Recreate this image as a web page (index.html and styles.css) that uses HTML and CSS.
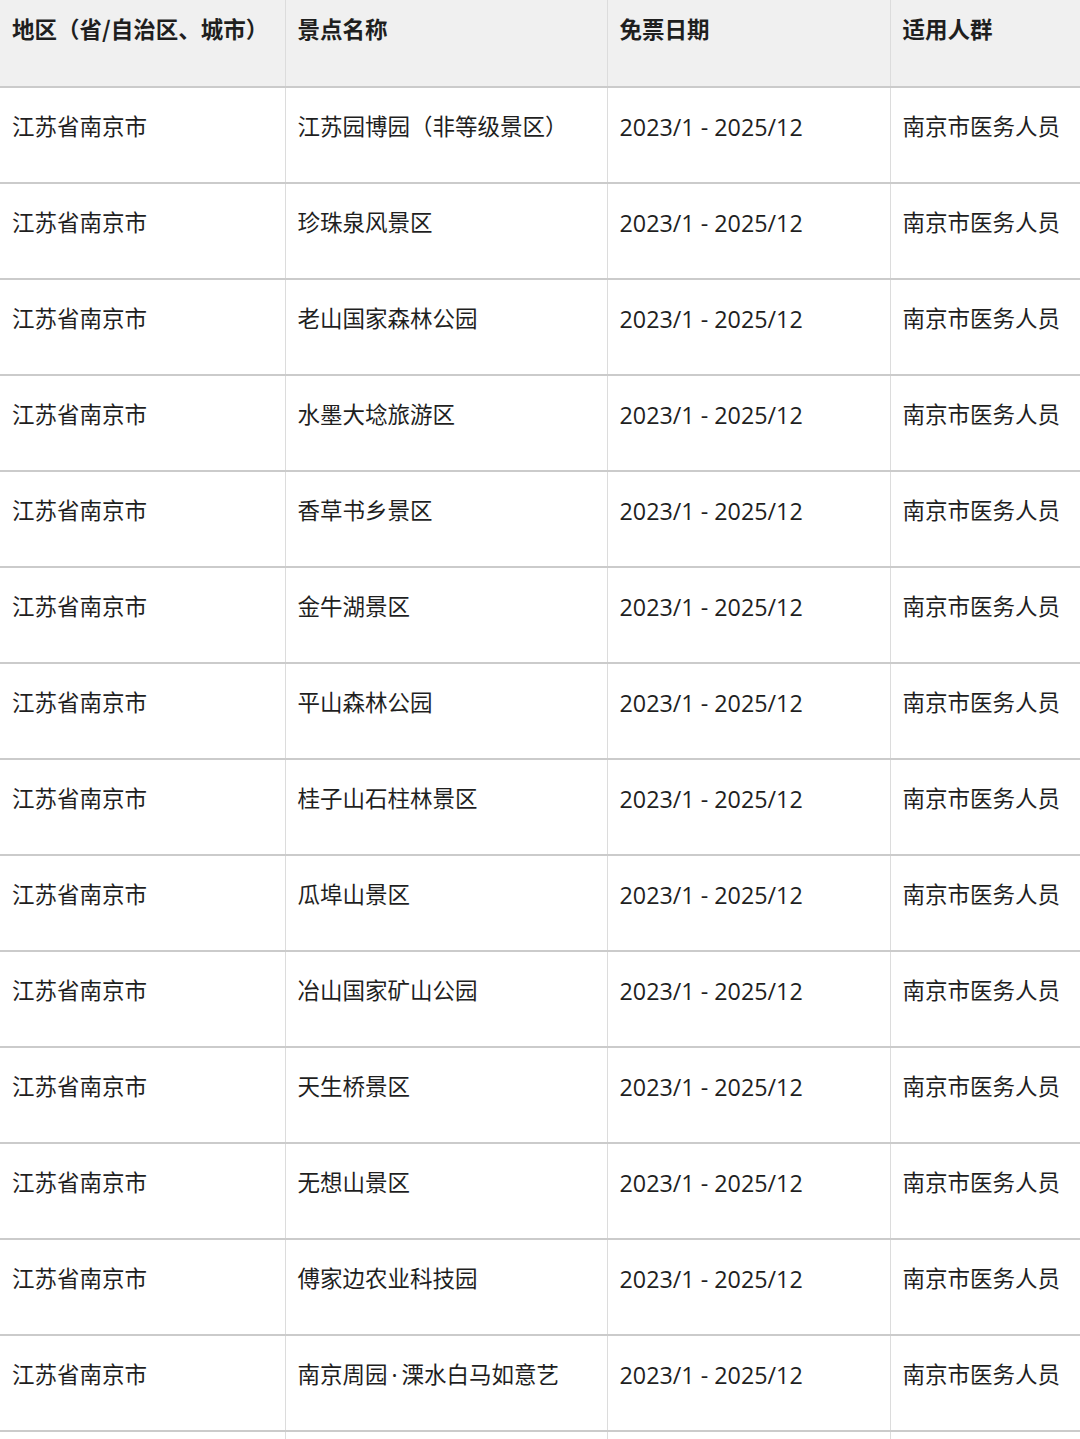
FILE: index.html
```html
<!DOCTYPE html>
<html lang="zh-CN">
<head>
<meta charset="utf-8">
<title>免票景区</title>
<link rel="stylesheet" href="styles.css">
</head>
<body>
<table class="tbl">
  <colgroup>
    <col class="c1"><col class="c2"><col class="c3"><col class="c4">
  </colgroup>
  <thead>
    <tr><th>地区（省/自治区、城市）</th><th>景点名称</th><th>免票日期</th><th>适用人群</th></tr>
  </thead>
  <tbody>
    <tr><td>江苏省南京市</td><td>江苏园博园（非等级景区）</td><td class="date">2023/1 - 2025/12</td><td>南京市医务人员</td></tr>
    <tr><td>江苏省南京市</td><td>珍珠泉风景区</td><td class="date">2023/1 - 2025/12</td><td>南京市医务人员</td></tr>
    <tr><td>江苏省南京市</td><td>老山国家森林公园</td><td class="date">2023/1 - 2025/12</td><td>南京市医务人员</td></tr>
    <tr><td>江苏省南京市</td><td>水墨大埝旅游区</td><td class="date">2023/1 - 2025/12</td><td>南京市医务人员</td></tr>
    <tr><td>江苏省南京市</td><td>香草书乡景区</td><td class="date">2023/1 - 2025/12</td><td>南京市医务人员</td></tr>
    <tr><td>江苏省南京市</td><td>金牛湖景区</td><td class="date">2023/1 - 2025/12</td><td>南京市医务人员</td></tr>
    <tr><td>江苏省南京市</td><td>平山森林公园</td><td class="date">2023/1 - 2025/12</td><td>南京市医务人员</td></tr>
    <tr><td>江苏省南京市</td><td>桂子山石柱林景区</td><td class="date">2023/1 - 2025/12</td><td>南京市医务人员</td></tr>
    <tr><td>江苏省南京市</td><td>瓜埠山景区</td><td class="date">2023/1 - 2025/12</td><td>南京市医务人员</td></tr>
    <tr><td>江苏省南京市</td><td>冶山国家矿山公园</td><td class="date">2023/1 - 2025/12</td><td>南京市医务人员</td></tr>
    <tr><td>江苏省南京市</td><td>天生桥景区</td><td class="date">2023/1 - 2025/12</td><td>南京市医务人员</td></tr>
    <tr><td>江苏省南京市</td><td>无想山景区</td><td class="date">2023/1 - 2025/12</td><td>南京市医务人员</td></tr>
    <tr><td>江苏省南京市</td><td>傅家边农业科技园</td><td class="date">2023/1 - 2025/12</td><td>南京市医务人员</td></tr>
    <tr><td>江苏省南京市</td><td>南京周园<span class="dot">·</span>溧水白马如意艺</td><td class="date">2023/1 - 2025/12</td><td>南京市医务人员</td></tr>
    <tr><td></td><td></td><td></td><td></td></tr>
  </tbody>
</table>
</body>
</html>
```
FILE: styles.css
```css
html, body {
  margin: 0;
  padding: 0;
  background: #ffffff;
}
body {
  font-family: "Noto Sans CJK SC", "Noto Sans", sans-serif;
  color: #1f1f1f;
  overflow: hidden;
}
.tbl {
  width: 1080px;
  table-layout: fixed;
  border-collapse: collapse;
  font-size: 22.5px;
}
.c1 { width: 285px; }
.c2 { width: 322px; }
.c3 { width: 283px; }
.c4 { width: 190px; }
.tbl th,
.tbl td {
  text-align: left;
  vertical-align: top;
  padding: 0 0 0 12px;
  border-left: 1px solid #dcdcdc;
  border-bottom: 2px solid #cbcbcb;
  white-space: nowrap;
  overflow: hidden;
  line-height: 30px;
  box-sizing: border-box;
}
.tbl th:first-child,
.tbl td:first-child {
  border-left: none;
}
.tbl th {
  background: #f0f0f0;
  font-weight: 700;
  height: 87px;
  padding-top: 13px;
}
.tbl td {
  height: 96px;
  padding-top: 22px;
  font-weight: 400;
}
.tbl td.date {
  font-family: "Open Sans", "Noto Sans", sans-serif;
  font-size: 23.3px;
  padding-top: 24px;
}
.dot {
  font-family: "Noto Sans", sans-serif;
  margin: 0 4px;
}
```
